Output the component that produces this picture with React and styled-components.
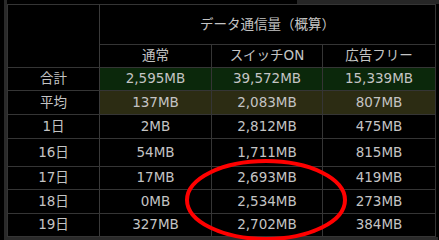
import React from 'react'
import styled, { createGlobalStyle } from 'styled-components'

const GlobalStyle = createGlobalStyle`
  html, body {
    margin: 0;
    padding: 0;
    background: #000;
  }
  body {
    font-family: "DejaVu Sans", "Noto Sans CJK JP", sans-serif;
  }
`

const Page = styled.div`
  width: 439px;
  height: 240px;
  background: #000;
  padding-left: 4px;
  box-sizing: border-box;
  position: relative;
  overflow: hidden;
`

const Frame = styled.div`
  width: 431px;
  border-left: 3px solid #2a2a2a;
  border-bottom: 3px solid #2a2a2a;
`

const TopStrip = styled.div`
  height: 4px;
  display: flex;
  justify-content: flex-end;
  margin-right: -4px;
`

const StripPart = styled.div`
  width: 145px;
  background: #262626;
`

const Table = styled.table`
  border-collapse: collapse;
  table-layout: fixed;
  width: 428px;
  color: #c4c4c4;
  font-size: 13.5px;
`

const Cell = styled.td`
  border: 1px solid #353535;
  text-align: center;
  vertical-align: middle;
  padding: 0;
  height: ${(p) => p.h || 22}px;
  background: ${(p) => p.bg || '#000'};
  line-height: 1;
`

const LabelCell = styled(Cell)`
  border-right-color: #3a3a3a;
`

const Ellipse = styled.svg`
  position: absolute;
  left: 0;
  top: 0;
  pointer-events: none;
`

const rows = [
  { label: '合計', vals: ['2,595MB', '39,572MB', '15,339MB'], bg: '#0b280b', h: 22 },
  { label: '平均', vals: ['137MB', '2,083MB', '807MB'], bg: '#2c2c13', h: 23 },
  { label: '1日', vals: ['2MB', '2,812MB', '475MB'], h: 23 },
  { label: '16日', vals: ['54MB', '1,711MB', '815MB'], h: 27 },
  { label: '17日', vals: ['17MB', '2,693MB', '419MB'], h: 22 },
  { label: '18日', vals: ['0MB', '2,534MB', '273MB'], h: 23 },
  { label: '19日', vals: ['327MB', '2,702MB', '384MB'], h: 22 },
]

export default function App() {
  return (
    <Page>
      <GlobalStyle />
      <Frame>
        <TopStrip>
          <StripPart />
        </TopStrip>
        <Table>
          <colgroup>
            <col style={{ width: 92 }} />
            <col style={{ width: 112 }} />
            <col style={{ width: 111 }} />
            <col style={{ width: 113 }} />
          </colgroup>
          <tbody>
            <tr>
              <LabelCell rowSpan={2} />
              <Cell colSpan={3} h={39}>データ通信量（概算）</Cell>
            </tr>
            <tr>
              <Cell h={22}>通常</Cell>
              <Cell h={22}>スイッチON</Cell>
              <Cell h={22}>広告フリー</Cell>
            </tr>
            {rows.map((r) => (
              <tr key={r.label}>
                <LabelCell h={r.h}>{r.label}</LabelCell>
                {r.vals.map((v, i) => (
                  <Cell key={i} h={r.h} bg={r.bg}>{v}</Cell>
                ))}
              </tr>
            ))}
          </tbody>
        </Table>
      </Frame>
      <Ellipse width="439" height="240">
        <ellipse cx="266" cy="200" rx="79" ry="39" fill="none" stroke="#ff0000" strokeWidth="4" />
      </Ellipse>
    </Page>
  )
}
